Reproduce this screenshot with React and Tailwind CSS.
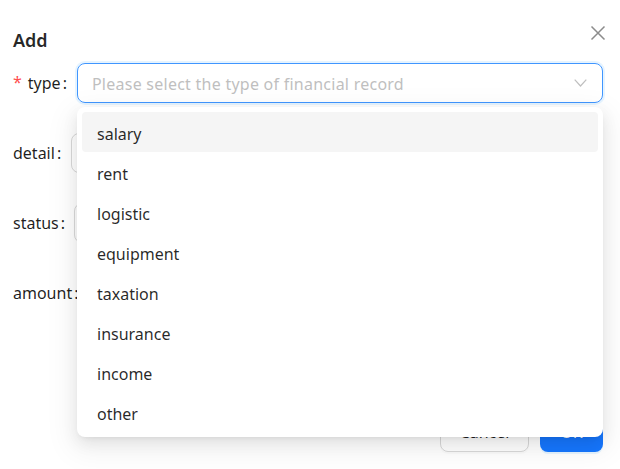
import React from "react";

const items = ["salary", "rent", "logistic", "equipment", "taxation", "insurance", "income", "other"];

function Label({ children, required, gap }) {
  return (
    <div className="flex items-center shrink-0 text-[16px] text-[rgba(0,0,0,0.88)]">
      {required && <span className="text-[#ff4d4f] mr-[6px] text-[16px] leading-none -mt-[2px]">*</span>}
      <span>{children}</span>
      <span className={"ml-[2px] " + gap}>:</span>
    </div>
  );
}

export default function App() {
  return (
    <div
      className="relative w-[620px] h-[469px] bg-white overflow-hidden"
      style={{ fontFamily: '"Noto Sans", sans-serif' }}
    >
      <div className="flex justify-between items-start pl-[13px] pr-[14px] pt-[27px]">
        <div className="text-[18px] leading-[26px] font-semibold text-[rgba(0,0,0,0.85)]">Add</div>
        <svg width="16" height="16" viewBox="0 0 16 16" className="-mt-[2px]">
          <path d="M1.5 1.5 L14.5 14.5 M14.5 1.5 L1.5 14.5" stroke="#8c8c8c" strokeWidth="1.5" fill="none" />
        </svg>
      </div>

      <div className="flex flex-col gap-[30px] mt-[10px] pl-[13px] pr-[17px]">
        <div className="flex items-center h-[40px]">
          <Label required gap="mr-[10px]">type</Label>
          <div className="flex-1 h-[40px] flex items-center justify-between rounded-[8px] border border-[#4096ff] shadow-[0_0_0_2px_rgba(5,145,255,0.1)] pl-[14px] pr-[15px]">
            <span className="text-[16px] tracking-[0.25px] text-[#bfbfbf] pt-[2px]">Please select the type of financial record</span>
            <svg width="13" height="8" viewBox="0 0 13 8">
              <path d="M0.7 0.7 L6.5 7 L12.3 0.7" stroke="#bfbfbf" strokeWidth="1.2" fill="none" />
            </svg>
          </div>
        </div>
        <div className="flex items-center h-[40px]">
          <Label gap="mr-[10px]">detail</Label>
          <div className="flex-1 h-[40px] rounded-[8px] border border-[#d9d9d9]" />
        </div>
        <div className="flex items-center h-[40px]">
          <Label gap="mr-[9px]">status</Label>
          <div className="flex-1 h-[40px] rounded-[8px] border border-[#d9d9d9]" />
        </div>
        <div className="flex items-center h-[40px]">
          <Label gap="mr-[9px]">amount</Label>
          <div className="flex-1 h-[40px] rounded-[8px] border border-[#d9d9d9]" />
        </div>
      </div>

      <div className="flex justify-end gap-[11px] pr-[17px] mt-[99px]">
        <div className="w-[89px] h-[40px] rounded-[8px] border border-[#d9d9d9] flex items-center justify-center text-[16px] text-[rgba(0,0,0,0.88)] shadow-[0_2px_0_rgba(0,0,0,0.02)]">
          Cancel
        </div>
        <div className="w-[63px] h-[40px] rounded-[8px] bg-[#1677ff] flex items-center justify-center text-[16px] text-white shadow-[0_2px_0_rgba(5,145,255,0.1)]">
          OK
        </div>
      </div>

      <div className="absolute left-[77px] top-[107px] w-[526px] h-[330px] bg-white rounded-[8px] p-[5px] shadow-[0_6px_16px_0_rgba(0,0,0,0.08),0_3px_6px_-4px_rgba(0,0,0,0.12),0_9px_28px_8px_rgba(0,0,0,0.05)]">
        {items.map((it, i) => (
          <div
            key={it}
            className={
              "h-[40px] flex items-center pl-[15px] pt-[3px] rounded-[4px] text-[16px] text-[rgba(0,0,0,0.85)] " +
              (i === 0 ? "bg-[#f5f5f5]" : "")
            }
          >
            {it}
          </div>
        ))}
      </div>
    </div>
  );
}
